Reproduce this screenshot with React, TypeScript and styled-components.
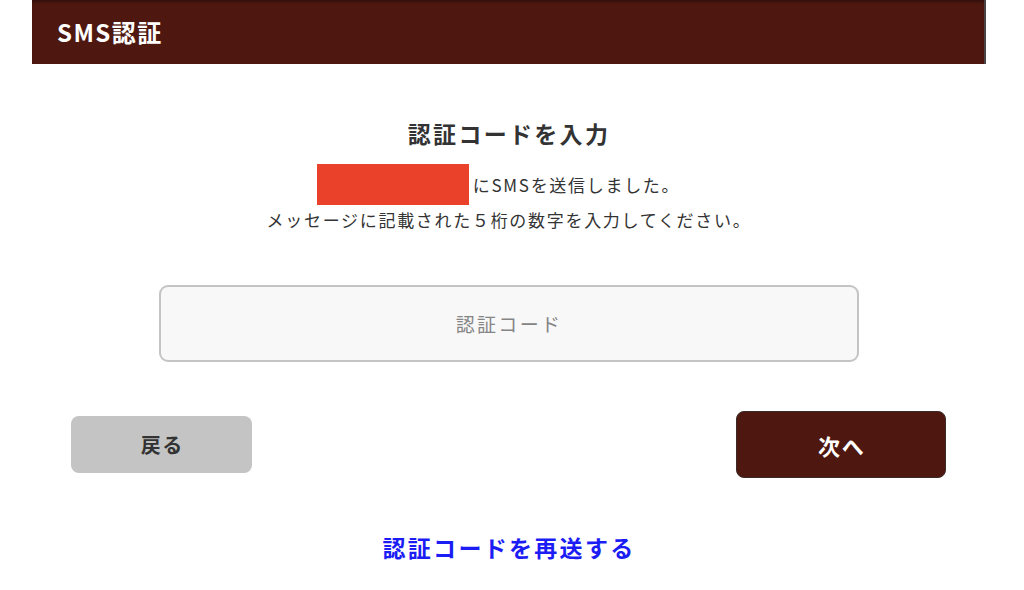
import React from "react";
import styled, { createGlobalStyle } from "styled-components";

const GlobalStyle = createGlobalStyle`
  html, body {
    margin: 0;
    padding: 0;
    background: #ffffff;
  }
  body {
    font-family: "Noto Sans CJK JP", "Noto Sans", sans-serif;
    color: #333333;
  }
`;

const Page = styled.div`
  width: 954px;
  margin-left: 32px;
  display: flex;
  flex-direction: column;
`;

const Header = styled.header`
  height: 64px;
  background: #4e1810;
  box-shadow: inset 0 3px 3px -1px rgba(0, 0, 0, 0.35);
  border-right: 2px solid #4a4444;
  display: flex;
  align-items: center;
  padding-left: 25px;
  box-sizing: border-box;
`;

const HeaderTitle = styled.h1`
  margin: 0;
  color: #ffffff;
  font-size: 24px;
  font-weight: 700;
  letter-spacing: 0.06em;
  line-height: 1;
`;

const Content = styled.main`
  display: flex;
  flex-direction: column;
  align-items: center;
  padding-top: 53px;
`;

const Title = styled.h2`
  margin: 0;
  font-size: 23px;
  font-weight: 700;
  line-height: 32px;
  letter-spacing: 0.1em;
  color: #333333;
`;

const Message = styled.div`
  margin-top: 15px;
  display: flex;
  flex-direction: column;
  align-items: center;
  font-size: 17px;
  letter-spacing: 0.1em;
  color: #333333;
`;

const SentLine = styled.div`
  display: flex;
  align-items: center;
  height: 41px;
  padding-right: 21px;
  line-height: 1;
`;

const Redacted = styled.span`
  display: inline-block;
  width: 152px;
  height: 41px;
  background: #e9412a;
  margin-right: 4px;
`;

const InfoLine = styled.div`
  line-height: 30px;
`;

const CodeInput = styled.input`
  margin-top: 50px;
  width: 700px;
  height: 77px;
  box-sizing: border-box;
  border: 2px solid #c4c4c4;
  border-radius: 9px;
  background: #f8f8f8;
  font-family: "Noto Sans CJK JP", "Noto Sans", sans-serif;
  font-size: 19px;
  letter-spacing: 0.12em;
  text-align: center;
  outline: none;
  color: #333333;

  &::placeholder {
    color: #858585;
  }
`;

const ButtonRow = styled.div`
  margin-top: 49px;
  align-self: stretch;
  height: 67px;
  display: flex;
  align-items: center;
  justify-content: space-between;
  padding: 0 40px 0 39px;
`;

const Button = styled.button<{ $primary?: boolean }>`
  border: ${(p) => (p.$primary ? "1px solid #3b2a28" : "none")};
  border-radius: 8px;
  cursor: pointer;
  font-family: "Noto Sans CJK JP", "Noto Sans", sans-serif;
  font-weight: 700;
  letter-spacing: 0.08em;
  width: ${(p) => (p.$primary ? "210px" : "181px")};
  height: ${(p) => (p.$primary ? "67px" : "57px")};
  font-size: ${(p) => (p.$primary ? "22px" : "20px")};
  background: ${(p) => (p.$primary ? "#4e1810" : "#c4c4c4")};
  color: ${(p) => (p.$primary ? "#ffffff" : "#333333")};
  padding: 0 0 0 0.08em;
`;

const ResendLink = styled.a`
  margin-top: 53px;
  font-size: 23px;
  font-weight: 700;
  line-height: 32px;
  letter-spacing: 0.1em;
  color: #1c1cf5;
  text-decoration: none;
  cursor: pointer;
`;

export default function App() {
  return (
    <>
      <GlobalStyle />
      <Page>
        <Header>
          <HeaderTitle>SMS認証</HeaderTitle>
        </Header>
        <Content>
          <Title>認証コードを入力</Title>
          <Message>
            <SentLine>
              <Redacted />
              にSMSを送信しました。
            </SentLine>
            <InfoLine>メッセージに記載された５桁の数字を入力してください。</InfoLine>
          </Message>
          <CodeInput placeholder="認証コード" />
          <ButtonRow>
            <Button>戻る</Button>
            <Button $primary>次へ</Button>
          </ButtonRow>
          <ResendLink>認証コードを再送する</ResendLink>
        </Content>
      </Page>
    </>
  );
}
